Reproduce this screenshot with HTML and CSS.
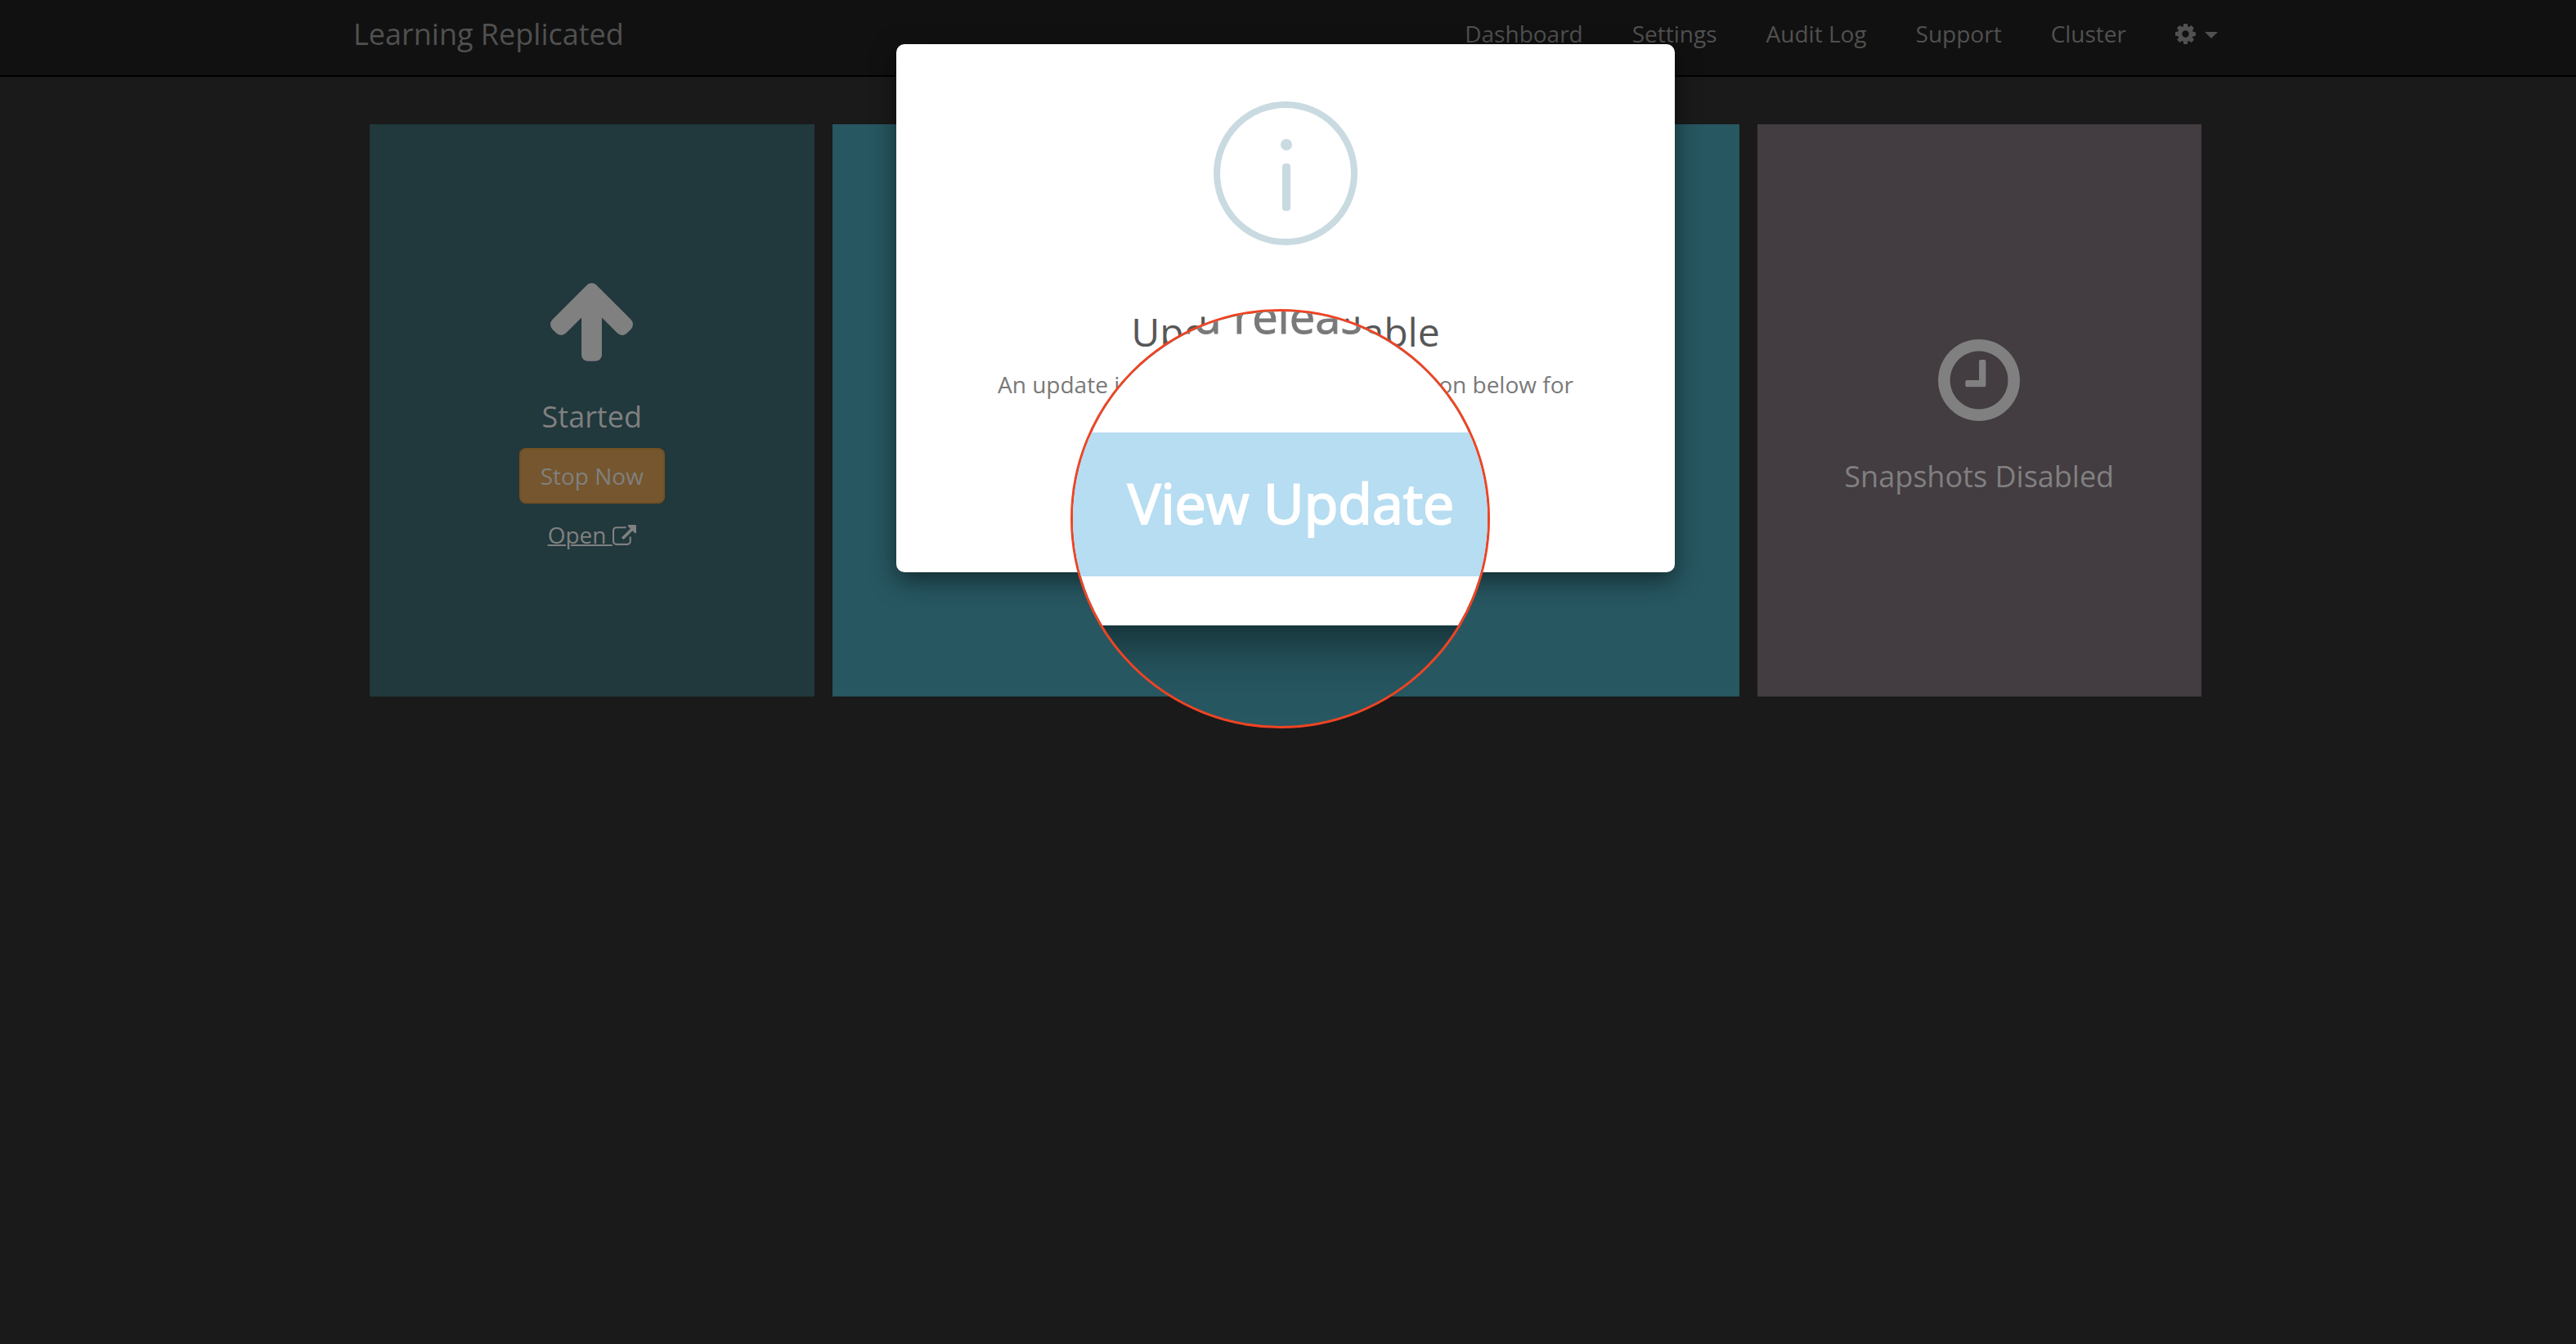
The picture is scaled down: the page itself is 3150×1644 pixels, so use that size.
FILE: index.html
```html
<!DOCTYPE html>
<html lang="en">
<head>
<meta charset="utf-8">
<title>Learning Replicated</title>
<link rel="stylesheet" href="styles.css">
</head>
<body>
<header class="navbar">
  <div class="navbar-inner">
    <a class="brand" href="#">Learning Replicated</a>
    <nav class="nav-links">
      <a href="#">Dashboard</a>
      <a href="#">Settings</a>
      <a href="#">Audit Log</a>
      <a href="#">Support</a>
      <a href="#">Cluster</a>
      <button class="gear-menu" type="button" aria-label="Options">
        <svg class="gear" viewBox="128 128 1536 1536" aria-hidden="true"><path d="M1152 896q0-106-75-181t-181-75-181 75-75 181 75 181 181 75 181-75 75-181zm512-109v222q0 12-8 23t-20 13l-185 28q-19 54-39 91 35 50 107 138 10 12 10 25t-9 23q-27 37-99 108t-94 71q-12 0-26-9l-138-108q-44 23-91 38-16 136-29 186-7 28-36 28h-222q-14 0-24.5-8.5t-11.5-21.5l-28-184q-49-16-90-37l-141 107q-10 9-25 9-14 0-25-11-126-114-165-168-7-10-7-23 0-12 8-23 15-21 51-66.5t54-70.5q-27-50-41-99l-183-27q-13-2-21-12.5t-8-23.5v-222q0-12 8-23t19-13l186-28q14-46 39-92-40-57-107-138-10-12-10-24 0-10 9-23 26-36 98.5-107.5t94.5-71.5q13 0 26 10l138 107q44-23 91-38 16-136 29-186 7-28 36-28h222q14 0 24.5 8.5t11.5 21.5l28 184q49 16 90 37l142-107q9-9 24-9 13 0 25 10 129 119 165 170 7 8 7 22 0 12-8 23-15 21-51 66.5t-54 70.5q26 50 41 98l183 28q13 2 21 12.5t8 23.5z"/></svg>
        <svg class="caret" viewBox="0 0 16 8" aria-hidden="true"><path d="M0 0h16l-8 8z"/></svg>
      </button>
    </nav>
  </div>
</header>

<main class="tiles">
  <section class="tile tile-status">
    <svg class="arrow-icon" viewBox="117 160 1558 1504" aria-hidden="true"><path d="M1675 971q0 51-37 90l-75 75q-38 38-91 38-54 0-90-38l-294-293v704q0 52-37.500 84.500t-90.500 32.500h-128q-53 0-90.500-32.500t-37.500-84.500v-704l-294 293q-36 38-90 38t-90-38l-75-75q-38-38-38-90 0-53 38-91l651-651q35-37 90-37 54 0 91 37l651 651q37 39 37 91z"/></svg>
    <h2 class="tile-title">Started</h2>
    <button class="stop-button" type="button">Stop Now</button>
    <a class="open-link" href="#"><span>Open&nbsp;</span><svg class="open-icon" viewBox="0 0 1792 1536" aria-hidden="true"><path d="M1408 928v320q0 119-84.500 203.500t-203.500 84.500h-832q-119 0-203.500-84.500t-84.500-203.500v-832q0-119 84.500-203.500t203.500-84.500h704q14 0 23 9t9 23v64q0 14-9 23t-23 9h-704q-66 0-113 47t-47 113v832q0 66 47 113t113 47h832q66 0 113-47t47-113v-320q0-14 9-23t23-9h64q14 0 23 9t9 23zm384-864v512q0 26-19 45t-45 19-45-19l-176-176-652 652q-10 10-23 10t-23-10l-114-114q-10-10-10-23t10-23l652-652-176-176q-19-19-19-45t19-45 45-19h512q26 0 45 19t19 45z"/></svg></a>
  </section>
  <section class="tile tile-updates"></section>
  <section class="tile tile-snapshots">
    <svg class="clock-icon" viewBox="128 128 1536 1536" aria-hidden="true"><path d="M1024 544v448q0 14-9 23t-23 9h-320q-14 0-23-9t-9-23v-64q0-14 9-23t23-9h224v-352q0-14 9-23t23-9h64q14 0 23 9t9 23zm416 352q0-148-73-273t-198-198-273-73-273 73-198 198-73 273 73 273 198 198 273 73 273-73 198-198 73-273zm224 0q0 209-103 385.500t-279.500 279.500-385.500 103-385.500-103-279.500-279.500-103-385.500 103-385.500 279.500-279.500 385.500-103 385.500 103 279.500 279.500 103 385.500z"/></svg>
    <h2 class="tile-title">Snapshots Disabled</h2>
  </section>
</main>

<div class="overlay">
  <div class="dialog" role="dialog" aria-labelledby="dialog-title">
    <svg class="info-icon" viewBox="0 0 176 176" aria-hidden="true">
      <circle class="info-ring" cx="88" cy="88" r="84"/>
      <circle cx="89" cy="53" r="7"/>
      <rect x="84" y="76" width="10" height="58" rx="4"/>
    </svg>
    <h1 class="dialog-title" id="dialog-title">Update Available</h1>
    <p class="dialog-text">An update is available. Click the View button below for</p>
    <div class="lens">
      <div class="lens-sheet">
        <p class="lens-text">and release notes.</p>
        <button class="view-button" type="button">View Update</button>
      </div>
    </div>
  </div>
</div>
</body>
</html>
```
FILE: styles.css
```css
* {
  box-sizing: border-box;
}

body {
  margin: 0;
  padding-right: 6px;
  min-height: 100vh;
  background: #1a1a1a;
  color: #808080;
  font-family: "Open Sans", "Noto Sans", sans-serif;
  font-size: 28px;
  line-height: 40px;
}

h1, h2, p {
  margin: 0;
  font-weight: 400;
}

a {
  color: inherit;
  text-decoration: none;
}

button {
  border: 0;
  padding: 0;
  background: none;
  color: inherit;
  font: inherit;
}

svg {
  display: block;
  fill: currentColor;
}

.navbar {
  margin-right: -6px;
  padding: 0 6px 0 0;
  background: #111;
  border-bottom: 2px solid #000;
  color: #505050;
}

.navbar-inner {
  display: flex;
  align-items: flex-start;
  justify-content: space-between;
  max-width: 2280px;
  height: 92px;
  margin: 0 auto;
  padding-top: 22px;
}

.brand {
  font-size: 36px;
}

.nav-links {
  display: flex;
  align-items: center;
  gap: 60px;
  line-height: 38px;
}

.gear-menu {
  display: flex;
  align-items: center;
  gap: 11px;
}

.gear {
  width: 25px;
  height: 25px;
}

.caret {
  width: 16px;
  height: 8px;
  margin-top: 4px;
}

.tiles {
  display: grid;
  grid-template-columns: repeat(4, 1fr);
  gap: 22px;
  max-width: 2240px;
  margin: 58px auto 0;
}

.tile {
  display: flex;
  flex-direction: column;
  align-items: center;
  justify-content: center;
  min-height: 700px;
  padding-top: 14px;
}

.tile-status {
  background: #21383c;
}

.tile-updates {
  grid-column: span 2;
  background: #275761;
}

.tile-snapshots {
  background: #433c40;
}

.tile-title {
  font-size: 36px;
}

.arrow-icon {
  width: 101px;
  height: 98px;
  margin-bottom: 48px;
}

.clock-icon {
  width: 100px;
  height: 100px;
  margin-bottom: 48px;
}

.stop-button {
  height: 68px;
  margin: 18px 0;
  padding: 0 24px;
  border: 2px solid #735024;
  border-radius: 8px;
  background: #75562e;
}

.open-link {
  display: flex;
  align-items: center;
}

.open-link span {
  text-decoration: underline;
  text-decoration-thickness: 2px;
}

.open-icon {
  width: 29px;
  height: 25px;
}

.overlay {
  position: absolute;
  inset: 54px 6px auto 0;
  display: flex;
  justify-content: center;
}

.dialog {
  position: relative;
  display: flex;
  flex-direction: column;
  align-items: center;
  width: 952px;
  min-height: 646px;
  padding-top: 70px;
  border-radius: 10px;
  background: #fff;
  box-shadow: 0 10px 30px rgba(0, 0, 0, 0.5);
}

.info-icon {
  width: 176px;
  height: 176px;
  color: #c9dae1;
}

.info-ring {
  fill: none;
  stroke: currentColor;
  stroke-width: 8;
}

.dialog-title {
  margin-top: 76px;
  color: #575757;
  font-size: 48px;
  line-height: 60px;
}

.dialog-text {
  margin-top: 14px;
  color: #797979;
}

/* Magnifier over the confirm button */
.lens {
  position: absolute;
  top: 324px;
  left: 213px;
  width: 513px;
  height: 513px;
  overflow: hidden;
  border: 3px solid #ef4423;
  border-radius: 50%;
  background: #275761;
}

.lens-sheet {
  margin: -33px -62px 0 -36px;
  padding-bottom: 60px;
  background: #fff;
  box-shadow: 0 20px 60px rgba(0, 0, 0, 0.5);
}

.lens-text {
  padding-left: 118px;
  color: #797979;
  font-size: 56px;
  line-height: 76px;
  -webkit-text-stroke: 1px currentColor;
}

.view-button {
  display: block;
  width: 100%;
  height: 176px;
  margin-top: 105px;
  padding-bottom: 4px;
  background: #b6ddf2;
  color: #fff;
  font-size: 68px;
  -webkit-text-stroke: 2px currentColor;
}
```
